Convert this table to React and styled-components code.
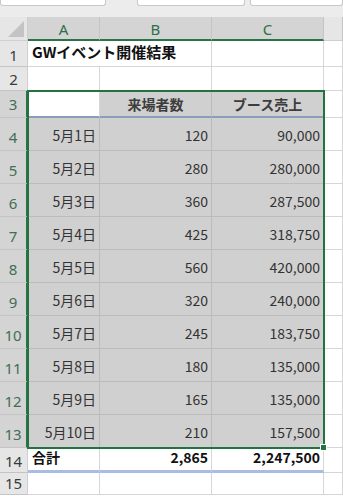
import React from 'react'
import styled, { createGlobalStyle } from 'styled-components'

const Global = createGlobalStyle`
  html, body { margin: 0; padding: 0; background: #ffffff; }
  body { font-family: "Noto Sans CJK JP", "Noto Sans", sans-serif; }
`

const Page = styled.div`
  width: 343px;
  height: 496px;
  overflow: hidden;
  background: #ffffff;
`

const Toolbar = styled.div`
  height: 17px;
  box-sizing: border-box;
  background: #ececec;
  display: flex;
`

const Field = styled.div`
  width: ${p => p.w}px;
  margin-left: ${p => p.ml || 0}px;
  height: 6px;
  box-sizing: border-box;
  background: #ffffff;
  border: 1px solid #c9c9c9;
  border-top: none;
  border-radius: 0 0 3px 3px;
`

const Grid = styled.div`
  display: grid;
  grid-template-columns: 28px 72px 112px 112px 19px;
  grid-template-rows: 24px 26px 24px 27px repeat(10, 33px) 25px 22px;
  position: relative;
`

const Corner = styled.div`
  background: #e6e6e6;
  border-right: 1px solid #cfcfcf;
  border-bottom: 1px solid #cfcfcf;
  box-sizing: border-box;
  display: flex;
  align-items: flex-end;
  justify-content: flex-end;
  padding: 0 3px 3px 0;
`

const ColHead = styled.div`
  background: ${p => (p.sel ? '#d4d4d4' : '#e6e6e6')};
  color: ${p => (p.sel ? '#2f6e47' : '#444')};
  border-right: 1px solid #c4c4c4;
  border-bottom: ${p => (p.sel ? '2px solid #2a7345' : '1px solid #cfcfcf')};
  box-sizing: border-box;
  display: flex;
  align-items: center;
  justify-content: center;
  font-family: "Noto Sans", sans-serif;
  font-size: 15px;
  padding-top: 1px;
`

const RowHead = styled.div`
  background: ${p => (p.sel ? '#d4d4d4' : '#e6e6e6')};
  color: ${p => (p.sel ? '#3f6f55' : '#3a3a3a')};
  border-bottom: 1px solid #c4c4c4;
  border-right: ${p => (p.sel ? '2px solid #2a7345' : '1px solid #cfcfcf')};
  box-sizing: border-box;
  display: flex;
  align-items: flex-end;
  justify-content: center;
  padding-bottom: ${p => (p.tall ? 4 : 2)}px;
  font-family: "Noto Sans", sans-serif;
  font-size: 15px;
  line-height: 18px;
`

const Cell = styled.div`
  grid-column: span ${p => p.span || 1};
  background: ${p => (p.sel ? '#d0d0d0' : '#ffffff')};
  border-right: 1px solid ${p => (p.sel ? '#bcbcbc' : '#d6d6d6')};
  border-bottom: ${p => p.under || `1px solid ${p.sel ? '#bcbcbc' : '#d6d6d6'}`};
  box-sizing: border-box;
  display: flex;
  align-items: ${p => p.valign || 'flex-end'};
  justify-content: ${p => p.align || 'flex-start'};
  padding: 0 ${p => (p.align === 'flex-end' ? 3 : 4)}px ${p => p.pb ?? 6}px;
  font-size: ${p => p.fs || 14}px;
  font-weight: ${p => (p.bold ? 700 : 400)};
  color: ${p => p.ink || (p.bold ? '#111' : '#333')};
  white-space: nowrap;
  line-height: 18px;
`

const Selection = styled.div`
  position: absolute;
  grid-row: 4 / 15;
  grid-column: 2 / 5;
  top: -1px;
  left: -1px;
  right: -1px;
  bottom: -1px;
  border: 2px solid #237242;
  pointer-events: none;
  z-index: 2;
`

const Handle = styled.div`
  position: absolute;
  right: -4px;
  bottom: -4px;
  width: 5px;
  height: 5px;
  background: #237242;
  border: 1px solid #ffffff;
`

const Triangle = () => (
  <svg width="16" height="16" viewBox="0 0 16 16">
    <polygon points="16,0 16,16 0,16" fill="#c3c3c3" />
  </svg>
)

const data = [
  ['5月1日', '120', '90,000'],
  ['5月2日', '280', '280,000'],
  ['5月3日', '360', '287,500'],
  ['5月4日', '425', '318,750'],
  ['5月5日', '560', '420,000'],
  ['5月6日', '320', '240,000'],
  ['5月7日', '245', '183,750'],
  ['5月8日', '180', '135,000'],
  ['5月9日', '165', '135,000'],
  ['5月10日', '210', '157,500'],
]

const headBlue = '2px solid #8d9bbd'
const totalBlue = '3px solid #a8bce4'

export default function App() {
  return (
    <Page>
      <Global />
      <Toolbar>
        <Field w={106} />
        <Field w={108} ml={31} />
        <Field w={93} ml={5} />
      </Toolbar>
      <Grid>
        <Corner><Triangle /></Corner>
        <ColHead sel>A</ColHead>
        <ColHead sel>B</ColHead>
        <ColHead sel>C</ColHead>
        <ColHead />

        <RowHead>1</RowHead>
        <Cell span={2} bold fs={15} pb={5}>GWイベント開催結果</Cell>
        <Cell />
        <Cell />

        <RowHead>2</RowHead>
        <Cell />
        <Cell />
        <Cell />
        <Cell />

        <RowHead sel tall>3</RowHead>
        <Cell under={headBlue} />
        <Cell sel bold ink="#3d3d3d" align="center" valign="center" pb={0} under={headBlue}>来場者数</Cell>
        <Cell sel bold ink="#3d3d3d" align="center" valign="center" pb={0} under={headBlue}>ブース売上</Cell>
        <Cell />

        {data.map((r, i) => (
          <React.Fragment key={r[0]}>
            <RowHead sel tall>{i + 4}</RowHead>
            <Cell sel align="flex-end">{r[0]}</Cell>
            <Cell sel align="flex-end">{r[1]}</Cell>
            <Cell sel align="flex-end">{r[2]}</Cell>
            <Cell />
          </React.Fragment>
        ))}

        <RowHead>14</RowHead>
        <Cell bold pb={4} under={totalBlue}>合計</Cell>
        <Cell bold align="flex-end" pb={4} under={totalBlue}>2,865</Cell>
        <Cell bold align="flex-end" pb={4} under={totalBlue}>2,247,500</Cell>
        <Cell />

        <RowHead>15</RowHead>
        <Cell />
        <Cell />
        <Cell />
        <Cell />

        <Selection><Handle /></Selection>
      </Grid>
    </Page>
  )
}
